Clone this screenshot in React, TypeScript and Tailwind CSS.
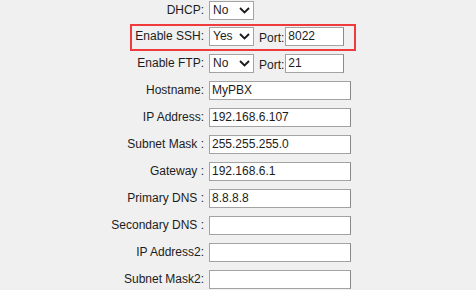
import type { ReactNode } from "react";

const font = { fontFamily: '"Liberation Sans", Arial, sans-serif' };

function Chevron() {
  return (
    <svg width="11" height="7" viewBox="0 0 11 7" className="shrink-0">
      <path d="M1 1 L5.5 5.5 L10 1" fill="none" stroke="#1a1a1a" strokeWidth="1.8" />
    </svg>
  );
}

function FakeSelect({ value }: { value: string }) {
  return (
    <div className="flex h-[19px] w-[45px] items-center justify-between border border-[#a3a3a3] bg-white pl-[3px] pr-[3px] text-[12px] text-[#1c1c1c]">
      <span className="leading-[17px]">{value}</span>
      <Chevron />
    </div>
  );
}

function TextBox({ value, width = "w-[142px]" }: { value: string; width?: string }) {
  return (
    <div
      className={`h-[19px] ${width} border border-[#a3a3a3] border-r-[#8a8a8a] bg-white pl-[2px] text-[12px] leading-[17px] text-[#1c1c1c]`}
    >
      {value}
    </div>
  );
}

function Row({
  label,
  children,
  highlight,
  className = "",
}: {
  label: string;
  children: ReactNode;
  highlight?: boolean;
  className?: string;
}) {
  return (
    <div className={`relative flex h-[19px] items-center ${className}`}>
      <div className="w-[204px] whitespace-pre text-right text-[12px] leading-[19px] text-[#1c1c1c]">{label}</div>
      <div className="ml-[5px] flex items-center">{children}</div>
      {highlight && (
        <div className="pointer-events-none absolute left-[130px] top-[-3px] h-[27px] w-[226px] border-2 border-[#ef3b3b]" />
      )}
    </div>
  );
}

function PortField({ value }: { value: string }) {
  return (
    <>
      <span className="ml-[5px] mr-[1px] mt-[3px] text-[12px] leading-[19px] text-[#1c1c1c]">Port:</span>
      <TextBox value={value} width="w-[59px]" />
    </>
  );
}

export default function App() {
  return (
    <div className="h-[290px] w-[476px] overflow-hidden bg-[#f0f0f0]" style={font}>
      <div className="flex flex-col gap-[8px]">
        <Row label="DHCP:" className="mb-[-1px] mt-[1px]">
          <FakeSelect value="No" />
        </Row>
        <Row label="Enable SSH:" highlight>
          <FakeSelect value="Yes" />
          <PortField value="8022" />
        </Row>
        <Row label="Enable FTP:">
          <FakeSelect value="No" />
          <PortField value="21" />
        </Row>
        <Row label="Hostname:">
          <TextBox value="MyPBX" />
        </Row>
        <Row label="IP Address:">
          <TextBox value="192.168.6.107" />
        </Row>
        <Row label="Subnet Mask :">
          <TextBox value="255.255.255.0" />
        </Row>
        <Row label="Gateway :">
          <TextBox value="192.168.6.1" />
        </Row>
        <Row label="Primary DNS :">
          <TextBox value="8.8.8.8" />
        </Row>
        <Row label="Secondary DNS :">
          <TextBox value="" />
        </Row>
        <Row label="IP Address2:">
          <TextBox value="" />
        </Row>
        <Row label="Subnet Mask2:">
          <TextBox value="" />
        </Row>
      </div>
    </div>
  );
}
